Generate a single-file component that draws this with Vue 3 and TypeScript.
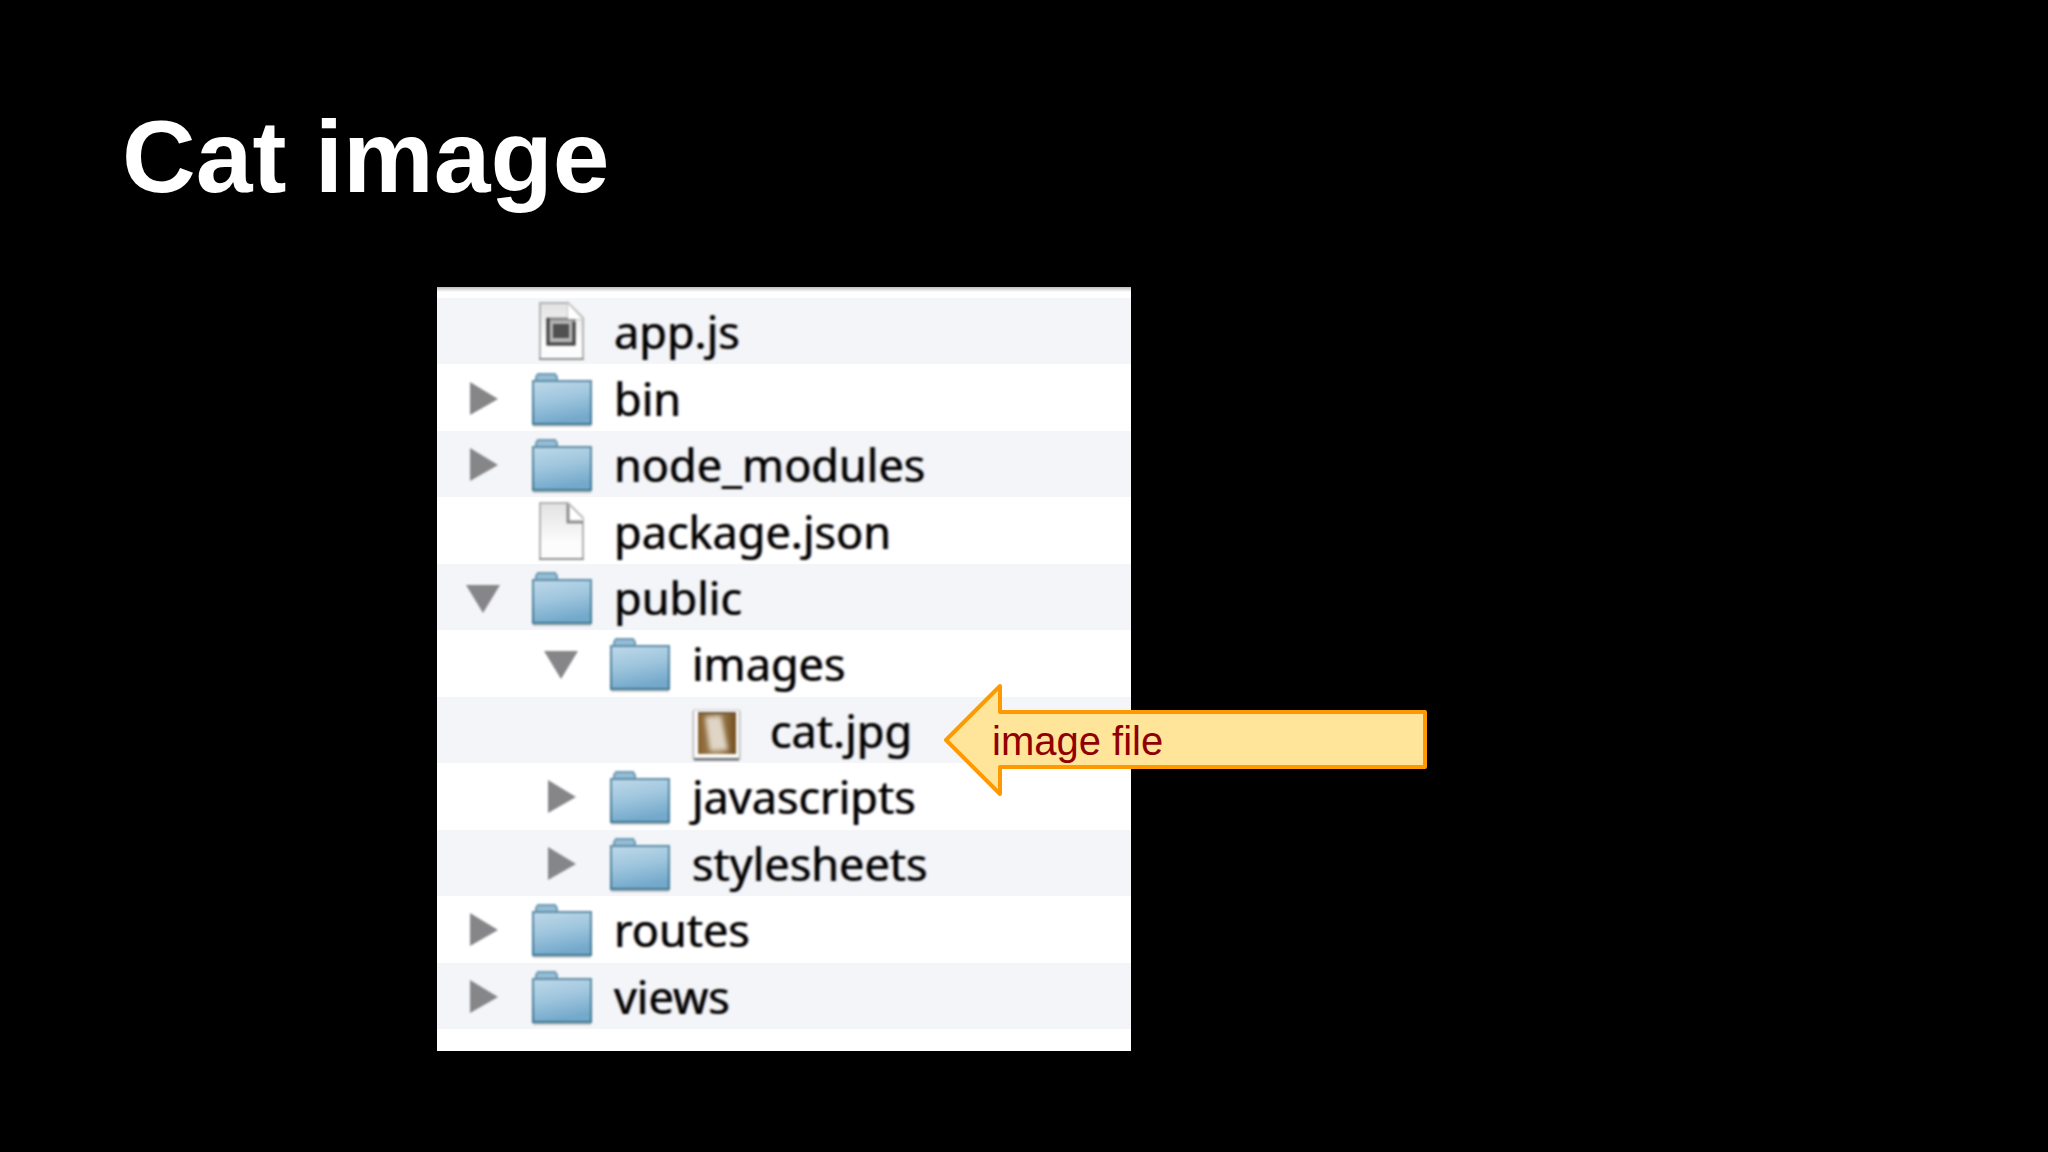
<script setup lang="ts">
type Kind = 'folder' | 'script' | 'file' | 'picture'

interface Entry {
  name: string
  kind: Kind
  depth: number
  open?: boolean
}

const entries: Entry[] = [
  { name: 'app.js', kind: 'script', depth: 0 },
  { name: 'bin', kind: 'folder', depth: 0 },
  { name: 'node_modules', kind: 'folder', depth: 0 },
  { name: 'package.json', kind: 'file', depth: 0 },
  { name: 'public', kind: 'folder', depth: 0, open: true },
  { name: 'images', kind: 'folder', depth: 1, open: true },
  { name: 'cat.jpg', kind: 'picture', depth: 2 },
  { name: 'javascripts', kind: 'folder', depth: 1 },
  { name: 'stylesheets', kind: 'folder', depth: 1 },
  { name: 'routes', kind: 'folder', depth: 0 },
  { name: 'views', kind: 'folder', depth: 0 },
]
</script>

<template>
  <main class="slide">
    <h1 class="title">Cat image</h1>

    <section class="browser" aria-label="Project files">
      <svg class="defs" width="0" height="0" aria-hidden="true">
        <defs>
          <linearGradient id="folder-fill" x1="0" y1="0" x2="0.25" y2="1">
            <stop offset="0" stop-color="#bfd9e9" />
            <stop offset="0.5" stop-color="#9fc6de" />
            <stop offset="1" stop-color="#74a9cb" />
          </linearGradient>
          <linearGradient id="folder-edge" x1="0" y1="0" x2="0" y2="1">
            <stop offset="0" stop-color="#5f8ea8" />
            <stop offset="1" stop-color="#3f7894" />
          </linearGradient>
          <linearGradient id="paper" x1="0" y1="0" x2="0" y2="1">
            <stop offset="0" stop-color="#e2e2e3" />
            <stop offset="0.7" stop-color="#fcfcfc" />
          </linearGradient>
          <linearGradient id="photo" x1="0" y1="0" x2="1" y2="0">
            <stop offset="0" stop-color="#8a6231" />
            <stop offset="0.5" stop-color="#a18459" />
            <stop offset="1" stop-color="#755020" />
          </linearGradient>
          <filter id="photo-soft"><feGaussianBlur stdDeviation="2" /></filter>
        </defs>
      </svg>

      <ul class="files">
        <li v-for="entry in entries" :key="entry.name" class="row" :class="'depth-' + entry.depth">
          <button
            v-if="entry.kind === 'folder'"
            class="toggle"
            type="button"
            :aria-expanded="!!entry.open"
            :aria-label="entry.name"
          >
            <svg viewBox="0 0 34 34" aria-hidden="true">
              <path v-if="entry.open" d="M0 5H34L17 33Z" fill="#868688" />
              <path v-else d="M4 1L32 18L4 34Z" fill="#868688" />
            </svg>
          </button>
          <span v-else class="toggle"></span>

          <svg class="icon" viewBox="0 0 62 66" aria-hidden="true">
            <template v-if="entry.kind === 'folder'">
              <path d="M2 61H60" stroke="#000" stroke-opacity="0.2" stroke-width="2" />
              <path d="M5 16V12L7 9H24L26 12V16Z" fill="#94bdd5" stroke="#6e9ab3" stroke-width="2" />
              <path d="M2 16H60V59H2Z" fill="url(#folder-fill)" stroke="url(#folder-edge)" stroke-width="2" />
            </template>
            <template v-else-if="entry.kind === 'picture'">
              <rect x="5" y="14" width="49" height="49" fill="#000" fill-opacity="0.14" />
              <path d="M7 62H52" stroke="#5c5c5c" stroke-width="3" />
              <rect x="7" y="13" width="45" height="48" fill="#fff" stroke="#c4c4c4" />
              <rect x="11" y="16" width="38" height="41" fill="url(#photo)" />
              <path d="M18 20L34 19L41 53L23 54Z" fill="#e0d5c6" filter="url(#photo-soft)" />
              <path d="M11 16H49" stroke="#6f5740" stroke-width="2" />
            </template>
            <template v-else>
              <path d="M9 5H37L52 20V61H9Z" fill="url(#paper)" stroke="#b3b3b4" stroke-width="2" />
              <path d="M8 61H53" stroke="#8f8f90" stroke-width="2" />
              <template v-if="entry.kind === 'script'">
                <path d="M37 5V21H52Z" fill="#fff" stroke="#c4c4c5" stroke-width="2" />
                <rect x="17" y="21" width="26" height="25" fill="#b4b4b4" stroke="#8a8a8a" stroke-width="3" />
                <path d="M17 20V46H43V24" fill="none" stroke="#444" stroke-width="3" />
                <rect x="22" y="26" width="16" height="14" fill="#505050" />
                <path d="M37 6V21H51Z" fill="#fff" />
              </template>
              <template v-else>
                <path d="M37 5V23H52V20Z" fill="#fff" />
                <path d="M37 5V24H52" fill="none" stroke="#8d8d8e" stroke-width="3" />
                <path d="M37 5L52 20" stroke="#c0c0c0" stroke-width="2" />
              </template>
            </template>
          </svg>
          <span class="name">{{ entry.name }}</span>
        </li>
      </ul>

      <div class="callout">
        <svg class="arrow" viewBox="0 0 486 114" aria-hidden="true">
          <path d="M3 57L57 3V29H482V84H57V111Z" fill="#ffe599" stroke="#ff9900" stroke-width="4" stroke-linejoin="round" />
        </svg>
        <span class="caption">image file</span>
      </div>
    </section>
  </main>
</template>

<style>
body {
  margin: 0;
  background: #000;
}
</style>

<style scoped>
.slide {
  box-sizing: border-box;
  min-height: 100vh;
  padding: 99px 122px;
  background: #000;
  font-family: "Liberation Sans", Arial, sans-serif;
}

.title {
  margin: 0 0 72px;
  color: #fff;
  font-size: 102px;
  line-height: 116px;
  font-weight: 700;
}

.browser {
  position: relative;
  box-sizing: border-box;
  width: 694px;
  margin-left: 315px;
  padding: 11px 0 22px;
  background: linear-gradient(#bdbdbd, #fff 5px);
}

.defs {
  position: absolute;
}

.files {
  display: grid;
  grid-template-rows: repeat(11, 1fr);
  height: 731px;
  margin: 0;
  padding: 0;
  list-style: none;
}

.row {
  display: flex;
  align-items: center;
  padding-left: 29px;
}

.row:nth-child(odd) {
  background: #f3f5f8;
}

.depth-1 {
  padding-left: 107px;
}

.depth-2 {
  padding-left: 185px;
}

.toggle {
  flex: none;
  width: 34px;
  height: 34px;
  margin-right: 31px;
  padding: 0;
  border: 0;
  background: none;
}

.toggle svg {
  display: block;
}

.icon {
  flex: none;
  width: 62px;
  height: 66px;
  margin-right: 21px;
}

.name {
  padding-top: 2px;
  color: #000;
  font-family: "Noto Sans", "Open Sans", sans-serif;
  font-size: 45px;
  line-height: 60px;
  text-shadow: -1px 0 rgba(170, 80, 0, 0.5), 1px 0 rgba(0, 70, 170, 0.5);
}

.toggle svg,
.icon,
.name {
  filter: blur(1px);
}

.callout {
  position: absolute;
  top: 396px;
  left: 506px;
  display: flex;
  align-items: center;
  width: 486px;
  height: 114px;
}

.arrow {
  position: absolute;
  inset: 0;
}

.caption {
  position: relative;
  padding: 2px 0 0 49px;
  color: #900000;
  font-size: 40px;
  line-height: 46px;
}
</style>
